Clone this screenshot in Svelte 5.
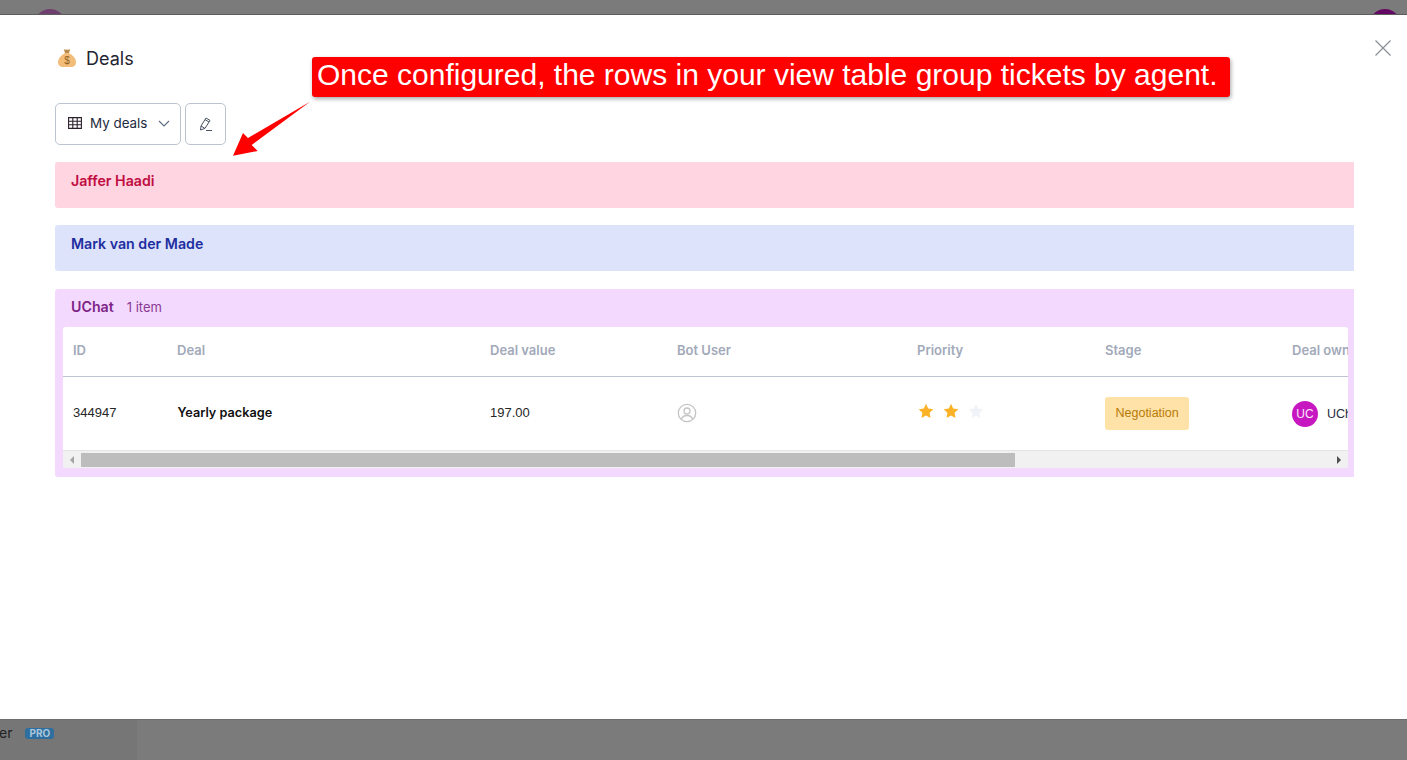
<script lang="ts">
	const columns = [
		{ label: 'ID', width: 104 },
		{ label: 'Deal', width: 313 },
		{ label: 'Deal value', width: 187 },
		{ label: 'Bot User', width: 240 },
		{ label: 'Priority', width: 188 },
		{ label: 'Stage', width: 187 },
		{ label: 'Deal owner', width: 160 }
	];
	const gridTemplate = columns.map((c) => `${c.width}px`).join(' ');
	const stars = [true, true, false];
	const starPath = 'M8 .8l2.2 4.7 5.1.7-3.7 3.6.9 5.1L8 12.500l-4.500 2.400.9-5.100L.7 6.200l5.100-.7z';
</script>

<div class="page">
	<header class="backdrop-top">
		<span class="peek peek-left"></span>
		<span class="peek peek-right"></span>
	</header>

	<main class="modal">
		<div class="title">
			<svg class="bag" viewBox="0 0 20 20" width="20" height="20" aria-hidden="true">
				<path d="M6.800 1.200c1.200.6 2 .6 3.200.2 1.200.4 2 .4 3.200-.2L12 5H8z" fill="#b98a4e" />
				<path d="M8 5h4c3.800 2.200 7 5.600 7 9.200 0 3.100-2.200 4.800-5 4.800H6c-2.800 0-5-1.700-5-4.800C1 10.600 4.200 7.200 8 5z" fill="#f2bd78" />
				<text x="10" y="16" text-anchor="middle" class="bag-sign">$</text>
			</svg>
			<h1>Deals</h1>
		</div>

		<div class="toolbar">
			<button class="view-select">
				<svg viewBox="0 0 14 12" width="14" height="12" aria-hidden="true">
					<path d="M.6.6h12.800v10.800H.6zM.6 4.200h12.800M.6 7.800h12.800M4.800.6v10.800M9.200.6v10.800" fill="none" stroke="#2a1f2b" stroke-width="1.100" />
				</svg>
				<span>My deals</span>
				<svg class="chevron" viewBox="0 0 12 7" width="12" height="7" aria-hidden="true">
					<path d="M1 1l5 5 5-5" fill="none" stroke="#5b6b7d" stroke-width="1.100" />
				</svg>
			</button>
			<button class="edit-btn" aria-label="Edit view">
				<svg viewBox="0 0 16 16" width="16" height="16" aria-hidden="true">
					<path d="M2.500 14L3 10l5-8 4 2.400-5 8zM7 3.600l4 2.400M3 10l3.800 2.300M8 14.500h6" fill="none" stroke="#4b5563" stroke-width="1" />
				</svg>
			</button>
		</div>

		<section class="group pink"><div class="group-head"><strong>Jaffer Haadi</strong></div></section>
		<section class="group blue"><div class="group-head"><strong>Mark van der Made</strong></div></section>

		<section class="group violet">
			<div class="group-head">
				<strong>UChat</strong>
				<span class="count">1 item</span>
			</div>
			<div class="table-card">
				<div class="table-scroll">
					<div class="row head" style:grid-template-columns={gridTemplate}>
						{#each columns as col}
							<div class="cell">{col.label}</div>
						{/each}
					</div>
					<div class="row body" style:grid-template-columns={gridTemplate}>
						<div class="cell id">344947</div>
						<div class="cell deal">Yearly package</div>
						<div class="cell value">197.00</div>
						<div class="cell bot">
							<svg viewBox="0 0 20 20" width="20" height="20" aria-hidden="true">
								<circle cx="10" cy="10" r="8.700" fill="none" stroke="#c4c4c4" stroke-width="1.300" />
								<circle cx="10" cy="8" r="3" fill="none" stroke="#c4c4c4" stroke-width="1.300" />
								<path d="M4.500 16.200c.8-2.500 2.800-3.700 5.500-3.700s4.700 1.200 5.500 3.700" fill="none" stroke="#c4c4c4" stroke-width="1.300" />
							</svg>
						</div>
						<div class="cell stars">
							{#each stars as on}
								<svg viewBox="0 0 16 16" width="16" height="16" aria-hidden="true">
									<path d={starPath} fill={on ? '#fbb226' : '#f1f3f9'} />
								</svg>
							{/each}
						</div>
						<div class="cell"><span class="stage">Negotiation</span></div>
						<div class="cell owner">
							<span class="avatar">UC</span>
							<span>UChat</span>
						</div>
					</div>
				</div>
				<div class="scrollbar">
					<span class="arrow left"></span>
					<span class="thumb"></span>
					<span class="arrow right"></span>
				</div>
			</div>
		</section>

		<button class="close" aria-label="Close">
			<svg viewBox="0 0 16 16" width="16" height="16" aria-hidden="true">
				<path d="M.5.5l15 15M15.500.5l-15 15" stroke="#8b9099" stroke-width="1.300" fill="none" />
			</svg>
		</button>

		<div class="callout">Once configured, the rows in your view table group tickets by agent.</div>
		<svg class="pointer" viewBox="0 0 80 60" width="80" height="60" aria-hidden="true">
			<path d="M78 3.700L19.700 47l6 6L1 57.700 11 35l5 5z" fill="#f00" />
		</svg>
	</main>

	<footer class="backdrop-bottom">
		<span class="crumb">er</span>
		<span class="pro">PRO</span>
	</footer>
</div>

<style>
	:global(body) {
		margin: 0;
		background: #7b7b7b;
		font-family: Inter, 'Liberation Sans', sans-serif;
	}

	.page {
		display: flex;
		flex-direction: column;
		height: 760px;
		overflow: hidden;
	}

	.backdrop-top {
		position: relative;
		flex: 0 0 15px;
		background: #7b7b7b;
		overflow: hidden;
		border-bottom: 1px solid #5d5d5d;
		box-sizing: border-box;
	}

	.peek {
		position: absolute;
		top: 9px;
		width: 32px;
		height: 32px;
		border-radius: 50%;
	}

	.peek-left {
		left: 34px;
		background: #6f3f6f;
	}

	.peek-right {
		left: 1369px;
		background: #640a64;
	}

	.modal {
		position: relative;
		flex: 0 0 704px;
		box-sizing: border-box;
		padding: 31px 53px 0 55px;
		background: #fff;
		overflow: hidden;
	}

	.title {
		display: flex;
		align-items: center;
		gap: 9px;
		height: 24px;
		padding-left: 2px;
	}

	.bag-sign {
		font: 10px 'Liberation Sans', sans-serif;
		fill: #8f5f24;
	}

	h1 {
		margin: 0;
		font-size: 18px;
		font-weight: 400;
		color: #1f2430;
	}

	.toolbar {
		display: flex;
		gap: 4px;
		margin-top: 33px;
	}

	button {
		font-family: inherit;
		background: #fff;
		padding: 0;
		cursor: pointer;
	}

	.view-select,
	.edit-btn {
		display: flex;
		align-items: center;
		height: 42px;
		box-sizing: border-box;
		border: 1px solid #bcc3d0;
		border-radius: 5px;
	}

	.view-select {
		width: 126px;
		padding: 0 0 2px 12px;
		gap: 8px;
		font-size: 13.400px;
		color: #1e2a3e;
	}

	.chevron {
		margin-left: 3px;
	}

	.edit-btn {
		width: 41px;
		justify-content: center;
	}

	.group {
		margin-top: 17px;
		border-radius: 3px 0 0 3px;
		min-height: 46px;
		box-sizing: border-box;
		padding: 9px 6px 8px 8px;
	}

	.group-head {
		display: flex;
		align-items: center;
		gap: 13px;
		height: 19px;
		padding-left: 8px;
		font-size: 14.200px;
	}

	.group-head strong {
		font-weight: 600;
	}

	.pink {
		background: #ffd5e2;
		color: #c00c40;
	}

	.blue {
		background: #dde3fb;
		color: #1e2ea0;
	}

	.violet {
		margin-top: 18px;
		padding-top: 8px;
		padding-bottom: 9px;
		background: #f3d9fe;
		color: #7e2487;
	}

	.count {
		font-size: 13px;
		color: #8a3b93;
	}

	.table-card {
		margin-top: 11px;
		background: #fff;
		border-radius: 3px;
		overflow: hidden;
	}

	.table-scroll {
		overflow: hidden;
	}

	.row {
		display: grid;
		width: 1379px;
	}

	.cell {
		display: flex;
		align-items: center;
		padding-left: 10px;
		white-space: nowrap;
		font-size: 13px;
	}

	.head {
		height: 50px;
		padding-bottom: 3px;
		border-bottom: 1px solid #bfc4d2;
		box-sizing: border-box;
		color: #a2a9b9;
		font-weight: 600;
	}

	.body {
		height: 73px;
		color: #1a1a1a;
	}

	.id,
	.value {
		padding-bottom: 2px;
		font-family: 'Liberation Sans', sans-serif;
		color: #262626;
	}

	.deal {
		padding: 0 0 3px 10.500px;
		font-size: 12.700px;
		font-weight: 600;
		color: #111;
	}

	.bot {
		padding-bottom: 2px;
	}

	.stars {
		gap: 9px;
		padding: 0 0 5px 11px;
		box-sizing: border-box;
	}

	.stage {
		display: inline-flex;
		align-items: center;
		height: 33px;
		box-sizing: border-box;
		padding: 0 10.500px 2px;
		background: #ffe2a8;
		border-radius: 3px;
		color: #b87a06;
		font: 12.500px 'Liberation Sans', sans-serif;
	}

	.owner {
		gap: 9px;
		color: #1e2a3e;
		font-family: 'Liberation Sans', sans-serif;
		font-size: 12.500px;
	}

	.avatar {
		display: flex;
		align-items: center;
		justify-content: center;
		width: 26px;
		height: 26px;
		border-radius: 50%;
		background: #c617c0;
		color: #fbe6fb;
		font-size: 12px;
	}

	.scrollbar {
		display: flex;
		align-items: center;
		height: 18px;
		box-sizing: border-box;
		border-top: 1px solid #e4e4e4;
		background: #f1f1f1;
	}

	.thumb {
		width: 934px;
		height: 14px;
		margin-left: 7px;
		background: #bdbdbd;
	}

	.arrow {
		width: 0;
		height: 0;
		border-top: 4px solid transparent;
		border-bottom: 4px solid transparent;
	}

	.arrow.left {
		margin-left: 7px;
		border-right: 4px solid #a3a3a3;
	}

	.arrow.right {
		margin-left: auto;
		margin-right: 7px;
		border-left: 4px solid #505050;
	}

	.close {
		position: absolute;
		top: 25px;
		right: 16px;
		display: block;
		border: 0;
		background: none;
		line-height: 0;
	}

	.callout {
		position: absolute;
		left: 312px;
		top: 42px;
		width: 918px;
		height: 40px;
		box-sizing: border-box;
		padding-left: 5px;
		background: #f00;
		border-radius: 3px;
		box-shadow: 1px 2px 4px rgba(0, 0, 0, 0.35);
		color: #fff;
		font: 30px/36px 'Liberation Sans', sans-serif;
		white-space: nowrap;
	}

	.pointer {
		position: absolute;
		left: 232px;
		top: 83px;
	}

	.backdrop-bottom {
		display: flex;
		align-items: center;
		gap: 12px;
		flex: 1;
		height: 41px;
		padding-bottom: 15px;
		box-sizing: border-box;
		background: linear-gradient(to right, #767676 137px, #7b7b7b 137px);
		border-top: 1px solid #6d6d6d;
	}

	.crumb {
		margin-left: -1px;
		font-size: 14px;
		color: #222;
	}

	.pro {
		position: relative;
		top: 1px;
		margin-left: 1px;
		padding: 0 4px;
		border-radius: 3px;
		background: #2f6f9f;
		color: #a9c6dc;
		font-size: 10px;
		font-weight: 700;
		line-height: 11px;
	}
</style>
